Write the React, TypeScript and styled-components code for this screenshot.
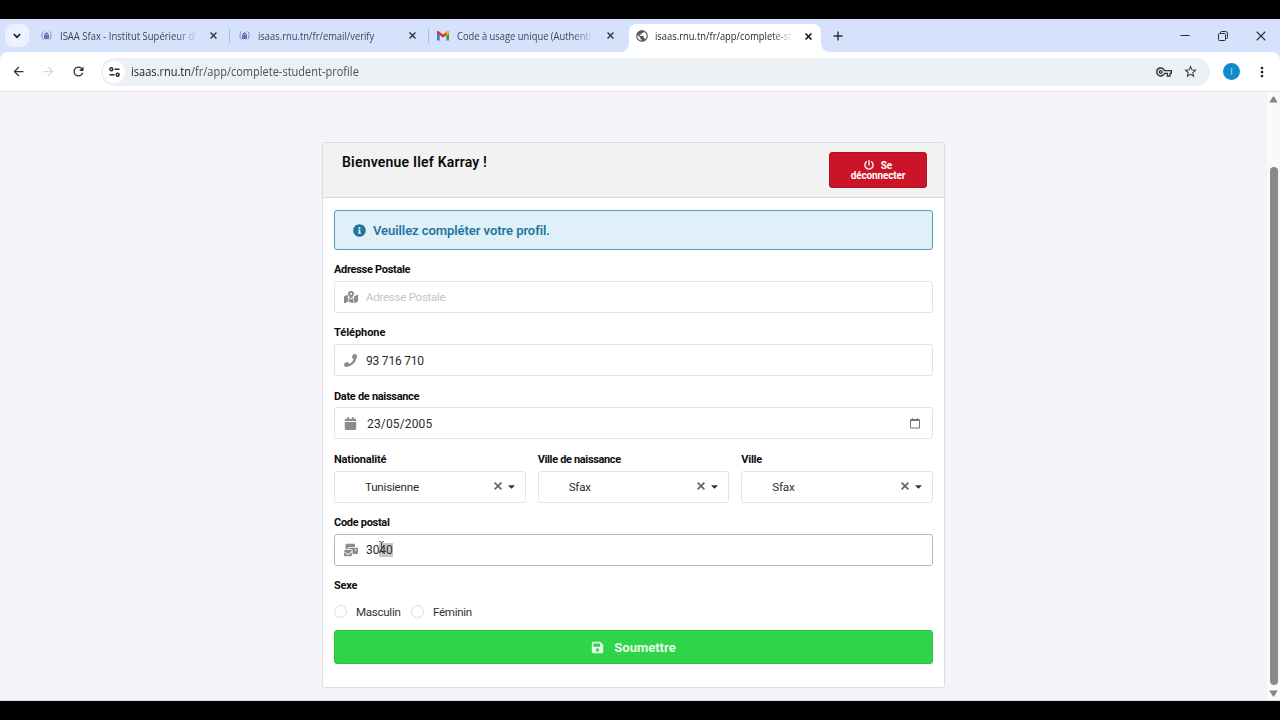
import React from "react";
import styled, { createGlobalStyle } from "styled-components";
import {
  FaInfoCircle,
  FaMapMarkedAlt,
  FaPhone,
  FaCalendar,
  FaMailBulk,
  FaSave,
  FaPowerOff,
  FaCaretDown,
} from "react-icons/fa";
import { MdOutlineVpnKey, MdStarBorder, MdMoreVert, MdArrowBack, MdArrowForward, MdRefresh, MdPublic } from "react-icons/md";

const Global = createGlobalStyle`
  * { box-sizing: border-box; }
  body { margin: 0; background: #000; overflow: hidden; }
  button { font: inherit; color: inherit; }
`;

const Screen = styled.div`
  width: 1280px;
  height: 720px;
  padding: 19px 0;
  display: flex;
  flex-direction: column;
  background: #000;
  font-family: "Open Sans", "Noto Sans", sans-serif;
  color: #1f1f1f;
`;

const TabStrip = styled.div`
  height: 33px;
  flex: none;
  display: flex;
  align-items: center;
  background: #d6e2fb;
`;

const TabSearch = styled.div`
  width: 24px;
  height: 23px;
  margin: 0 10px 0 5px;
  border-radius: 8px;
  background: #ebf2fe;
  display: flex;
  align-items: center;
  justify-content: center;
`;

const Tab = styled.div<{ $w: number; $left?: number; $active?: boolean; $divider?: boolean }>`
  position: relative;
  width: ${(p) => p.$w}px;
  height: ${(p) => (p.$active ? 28 : 14)}px;
  align-self: ${(p) => (p.$active ? "flex-end" : "center")};
  display: flex;
  align-items: center;
  padding: 0 ${(p) => (p.$active ? 9 : p.$divider ? 12 : 15)}px ${(p) => (p.$active ? 4 : 0)}px ${(p) => p.$left ?? 8}px;
  gap: 8px;
  background: ${(p) => (p.$active ? "#fff" : "transparent")};
  border-right: ${(p) => (p.$divider ? "1px solid #a3bfea" : "none")};
  border-radius: ${(p) => (p.$active ? "8px 8px 0 0" : "0")};
  ${(p) =>
    p.$active &&
    `&::before, &::after {
      content: "";
      position: absolute;
      bottom: 0;
      width: 8px;
      height: 8px;
    }
    &::before { left: -8px; background: radial-gradient(circle at 0 0, transparent 7.5px, #fff 8px); }
    &::after { right: -8px; background: radial-gradient(circle at 100% 0, transparent 7.5px, #fff 8px); }`}
`;

const TabTitle = styled.span<{ $fade?: boolean; $dark?: boolean }>`
  flex: 1;
  min-width: 0;
  white-space: nowrap;
  font-size: 10.3px;
  line-height: 14px;
  color: ${(p) => (p.$dark ? "#25282c" : "#3c4656")};
  ${(p) => p.$fade && "mask-image: linear-gradient(90deg, #000 calc(100% - 26px), transparent calc(100% - 4px));"}
`;

/* Narrows a run of text the way the interface font is narrower than the fallback. */
const Narrow = styled.span<{ $x: number }>`
  display: inline-block;
  white-space: nowrap;
  transform: scaleX(${(p) => p.$x});
  transform-origin: left;
`;

const Spacer = styled.div`
  flex: 1;
`;

const WindowButtons = styled.div`
  display: flex;
  align-items: center;
  gap: 28px;
  padding-right: 14px;
`;

const NewTab = styled.div`
  margin-left: 12px;
  display: flex;
`;

const Toolbar = styled.div`
  height: 40px;
  flex: none;
  display: flex;
  align-items: center;
  padding: 0 10px 0 11px;
  background: #fff;
  border-bottom: 1px solid #e0e2e4;
  border-radius: 8px 8px 0 0;
`;

const ToolbarBack = styled.div`
  background: #d6e2fb;
`;

const NavIcons = styled.div`
  display: flex;
  align-items: center;
  gap: 15px;
  width: 90px;
  color: #333;
`;

const Omnibox = styled.div`
  height: 28px;
  width: 1109px;
  border-radius: 14px;
  background: #ecf1f6;
  display: flex;
  align-items: center;
  padding: 0 12px 0 2px;
`;

const SiteInfo = styled.div`
  width: 22px;
  height: 22px;
  border-radius: 11px;
  background: #fff;
  display: flex;
  align-items: center;
  justify-content: center;
`;

const Url = styled.span`
  margin-left: 6px;
  font-size: 12px;
  color: #4b4f54;
  b { color: #1f1f1f; font-weight: 400; }
`;

const OmniActions = styled.div`
  display: flex;
  align-items: center;
  gap: 11px;
  color: #333;
`;

const Avatar = styled.div`
  width: 17px;
  height: 17px;
  margin: 0 14px 0 13px;
  border-radius: 50%;
  background: #0f8bca;
  color: #bfe6fa;
  font: 9px/17px "Open Sans", sans-serif;
  text-align: center;
`;

const Viewport = styled.div`
  flex: 1;
  min-height: 0;
  display: flex;
  background: #f5f3f7;
  border-bottom: 1px solid #d5dcdf;
`;

const Page = styled.main`
  flex: 1;
  padding: 50px 0 0 322px;
`;

const ScrollBar = styled.div`
  width: 13px;
  background: #fafafa;
  display: flex;
  flex-direction: column;
  align-items: center;
  padding: 4px 0 3px;
`;

const Thumb = styled.div`
  width: 8px;
  height: 518px;
  margin-top: 64px;
  border-radius: 4px;
  background: #898989;
`;

const Card = styled.section`
  width: 623px;
  height: 546px;
  border: 1px solid #dcdcde;
  border-radius: 3px;
  background: #fff;
  color: #111;
  font-family: Roboto, "Open Sans", sans-serif;
`;

const CardHeader = styled.header`
  height: 55px;
  display: flex;
  justify-content: space-between;
  padding: 9px 17px 0 19px;
  background: #f2f2f2;
  border-bottom: 1px solid #dadada;
`;

const Title = styled.h1`
  margin: 0;
  font-size: 14px;
  line-height: 20px;
  font-weight: 600;
  letter-spacing: 0.2px;
  color: #0a0a0a;
`;

const LogoutButton = styled.button`
  width: 98px;
  height: 36px;
  padding: 0 15px;
  border: 1px solid #b31226;
  border-radius: 3px;
  background: #cb1428;
  color: #fff;
  font-size: 10px;
  line-height: 10px;
  font-weight: 700;
  letter-spacing: -0.15px;
  svg { margin-right: 7px; vertical-align: -1px; opacity: 0.85; }
`;

const Form = styled.form`
  padding: 12px 11px 0;
`;

const Alert = styled.div`
  height: 40px;
  display: flex;
  align-items: center;
  gap: 7px;
  padding-left: 18px;
  border: 1px solid #5b9bb4;
  border-radius: 3px;
  background: #dff0f9;
  color: #2574a0;
  font-size: 13px;
  font-weight: 600;
  letter-spacing: -0.06px;
`;

const Row = styled.div`
  display: grid;
  grid-auto-flow: column;
  grid-auto-columns: 1fr;
  gap: 12px;
`;

const Field = styled.div<{ $short?: boolean }>`
  height: ${(p) => (p.$short ? 41 : 63.25)}px;
  padding-top: 10px;
`;

const Label = styled.label<{ $track?: number }>`
  display: block;
  height: 20.8px;
  font-size: 11px;
  line-height: 20px;
  font-weight: 700;
  letter-spacing: ${(p) => p.$track ?? -0.3}px;
  color: #0d0d0d;
`;

const Control = styled.div<{ $focus?: boolean; $right?: number }>`
  height: 32px;
  display: flex;
  align-items: center;
  padding: 0 ${(p) => p.$right ?? 12}px 0 9px;
  border: 1px solid ${(p) => (p.$focus ? "#b3b9bb" : "#e3e3e5")};
  border-radius: 3px;
  background: #fff;
  color: #8b8b8b;
`;

const Value = styled.span<{ $track?: number; $muted?: boolean; $indent?: number; $size?: number }>`
  margin-left: ${(p) => p.$indent ?? 8}px;
  padding-top: 1px;
  font-size: ${(p) => p.$size ?? 12}px;
  letter-spacing: ${(p) => p.$track ?? -0.1}px;
  color: ${(p) => (p.$muted ? "#c4c4c4" : "#2b2b2b")};
`;

const Selected = styled.span`
  position: relative;
  background: #c8c8c8;
`;

const Caret = styled.svg`
  position: absolute;
  left: -1px;
  top: -2px;
`;

const ClearAndOpen = styled.div`
  display: flex;
  align-items: center;
  gap: 4px;
  padding-bottom: 1px;
  color: #333;
`;

const Choices = styled.div`
  height: 15px;
  margin-top: -3px;
  display: flex;
  align-items: center;
`;

const Choice = styled.label<{ $w: number }>`
  width: ${(p) => p.$w}px;
  display: flex;
  align-items: center;
  gap: 9px;
  font-size: 11.6px;
  line-height: 16px;
  letter-spacing: -0.3px;
  color: #333;
`;

const Radio = styled.span`
  width: 13px;
  height: 13px;
  border: 1px solid #dadada;
  border-radius: 50%;
`;

const Submit = styled.button`
  width: 100%;
  height: 34px;
  margin-top: 11px;
  display: flex;
  align-items: center;
  justify-content: center;
  gap: 10px;
  border: 1px solid #35bd4c;
  border-radius: 3px;
  background: #2ed548;
  color: #e9fbe9;
  font-size: 13px;
  font-weight: 700;
`;

const Cross = ({ size = 7, color = "#27303b", weight = 1.5 }: { size?: number; color?: string; weight?: number }) => (
  <svg width={size} height={size} viewBox="0 0 8 8" stroke={color} strokeWidth={weight}>
    <path d="M.6.6l6.8 6.8M7.4.6L.6 7.4" />
  </svg>
);

const Crest = () => (
  <svg width="11" height="9" viewBox="0 0 12 10" fill="none" stroke="#7284b5" strokeWidth="1.1">
    <path d="M2.600.500C1 1.500 1.500 3.500.800 5 1.500 6.500 1 8.500 2.600 9.500M9.400.500C11 1.500 10.500 3.500 11.200 5 10.500 6.500 11 8.500 9.400 9.500" />
    <path d="M3.900 4.200L6 1.500l2.100 2.700v4.300H3.900zM3.900 6.200h4.200M6 4.200v4.300" stroke="#51649f" fill="#96a4cd" />
  </svg>
);

const GmailMark = () => (
  <svg width="12" height="10" viewBox="0 0 12 10">
    <path d="M0 1.200V9.500h2.700V3.800z" fill="#4478dd" />
    <path d="M12 1.200V9.500H9.300V3.800z" fill="#2ea650" />
    <path d="M0 2V1.200C0 .2 1.200-.2 2 .4L6 3.500l4-3.100c.8-.6 2-.2 2 .8V2L6 6.800z" fill="#d63a33" />
    <path d="M9.300 1v3.600L12 2.500V1.200C12 .2 10.800-.2 10 .4z" fill="#f2b91b" />
  </svg>
);

const Arrow = ({ down }: { down?: boolean }) => (
  <svg width="9" height="7" viewBox="0 0 9 7" fill="#858585">
    <path d={down ? "M.3.500h8.400L5 6.500H4z" : "M.3 6.500h8.400L5 .500H4z"} />
  </svg>
);

const SelectField = ({ label, value, track }: { label: string; value: string; track: number }) => (
  <Field>
    <Label $track={track}>{label}</Label>
    <Control $right={8}>
      <Value $indent={21} $size={11.6} $track={-0.2}>{value}</Value>
      <Spacer />
      <ClearAndOpen>
        <Cross size={8} color="#666" weight={1.7} />
        <FaCaretDown size={11} />
      </ClearAndOpen>
    </Control>
  </Field>
);

export default function App() {
  return (
    <>
      <Global />
      <Screen>
        <TabStrip>
          <TabSearch>
            <svg width="8" height="6" viewBox="0 0 8 6" fill="none" stroke="#1c1f24" strokeWidth="1.7">
              <path d="M.8 1l3.200 3.200L7.200 1" />
            </svg>
          </TabSearch>
          <Tab $w={191} $divider $left={2}>
            <Crest />
            <TabTitle $fade><Narrow $x={0.92}>ISAA Sfax - Institut Supérieur d’</Narrow></TabTitle>
            <Cross />
          </Tab>
          <Tab $w={199} $divider $left={9}>
            <Crest />
            <TabTitle><Narrow $x={0.91}>isaas.rnu.tn/fr/email/verify</Narrow></TabTitle>
            <Cross />
          </Tab>
          <Tab $w={200}>
            <GmailMark />
            <TabTitle $fade><Narrow $x={0.91}>Code à usage unique (Authenti</Narrow></TabTitle>
            <Cross />
          </Tab>
          <Tab $w={192} $active $left={6}>
            <MdPublic size={14} color="#55595f" style={{ marginRight: -2 }} />
            <TabTitle $fade $dark><Narrow $x={0.91}>isaas.rnu.tn/fr/app/complete-st</Narrow></TabTitle>
            <Cross color="#111" weight={1.8} />
          </Tab>
          <NewTab>
            <svg width="10" height="10" viewBox="0 0 10 10" stroke="#25303e" strokeWidth="1.400">
              <path d="M5 .5v9M.5 5h9" />
            </svg>
          </NewTab>
          <Spacer />
          <WindowButtons>
            <svg width="10" height="10" viewBox="0 0 10 10" stroke="#262d38"><path d="M.5 4.500h9" /></svg>
            <svg width="10" height="10" viewBox="0 0 10 10" fill="none" stroke="#262d38">
              <rect x=".5" y="2.500" width="7" height="7" rx="1" />
              <path d="M2.500 2.200V1.500q0-1 1-1h4q2 0 2 2v4q0 1-1 1H8" />
            </svg>
            <Cross size={10} weight={0.9} />
          </WindowButtons>
        </TabStrip>
        <ToolbarBack>
          <Toolbar>
            <NavIcons>
              <MdArrowBack size={15} />
              <MdArrowForward size={15} color="#dbd8d8" />
              <MdRefresh size={15} />
            </NavIcons>
            <Omnibox>
              <SiteInfo>
                <svg width="11" height="10" viewBox="0 0 11 10" fill="none" stroke="#25282c" strokeWidth="1.400">
                  <circle cx="2.300" cy="2.300" r="1.500" />
                  <path d="M5.500 2.300H10.500M.5 7.700h5" />
                  <circle cx="8.700" cy="7.700" r="1.500" />
                </svg>
              </SiteInfo>
              <Url><Narrow $x={0.918}><b>isaas.rnu.tn</b>/fr/app/complete-student-profile</Narrow></Url>
              <Spacer />
              <OmniActions>
                <MdOutlineVpnKey size={16} />
                <MdStarBorder size={15} />
              </OmniActions>
            </Omnibox>
            <Avatar>I</Avatar>
            <MdMoreVert size={16} />
          </Toolbar>
        </ToolbarBack>
        <Viewport>
          <Page>
            <Card>
              <CardHeader>
                <Title>Bienvenue Ilef Karray !</Title>
                <LogoutButton><FaPowerOff size={10} />Se déconnecter</LogoutButton>
              </CardHeader>
              <Form>
                <Alert><FaInfoCircle size={13} />Veuillez compléter votre profil.</Alert>
                <Field>
                  <Label>Adresse Postale</Label>
                  <Control><FaMapMarkedAlt size={14} /><Value $muted $size={11.6} $track={-0.3}>Adresse Postale</Value></Control>
                </Field>
                <Field>
                  <Label $track={-0.05}>Téléphone</Label>
                  <Control><FaPhone size={13} /><Value $indent={9} $track={-0.2}>93 716 710</Value></Control>
                </Field>
                <Field>
                  <Label>Date de naissance</Label>
                  <Control>
                    <FaCalendar size={13} /><Value $indent={10} $track={0.15}>23/05/2005</Value>
                    <Spacer />
                    <svg width="10" height="11" viewBox="0 0 10 11" fill="none" stroke="#777">
                      <path d="M.5 1.500h9v8.500h-9zM.5 2.500h9M2.500 0v2M7.500 0v2" />
                    </svg>
                  </Control>
                </Field>
                <Row>
                  <SelectField label="Nationalité" value="Tunisienne" track={-0.15} />
                  <SelectField label="Ville de naissance" value="Sfax" track={-0.35} />
                  <SelectField label="Ville" value="Sfax" track={-0.25} />
                </Row>
                <Field>
                  <Label>Code postal</Label>
                  <Control $focus>
                    <FaMailBulk size={14} />
                    <Value>
                      30
                      <Selected>
                        40
                        <Caret width="7" height="12" viewBox="0 0 7 12" fill="none" stroke="#444" strokeWidth=".9">
                          <path d="M1 .5q2.500 0 2.500 1.500Q3.500.500 6 .500M3.500 2v8M1 11.500q2.500 0 2.500-1.500 0 1.500 2.500 1.500" />
                        </Caret>
                      </Selected>
                    </Value>
                  </Control>
                </Field>
                <Field $short>
                  <Label $track={-0.2}>Sexe</Label>
                </Field>
                <Choices>
                  <Choice $w={77}><Radio />Masculin</Choice>
                  <Choice $w={80}><Radio />Féminin</Choice>
                </Choices>
                <Submit type="button"><FaSave size={13} />Soumettre</Submit>
              </Form>
            </Card>
          </Page>
          <ScrollBar>
            <Arrow />
            <Thumb />
            <Spacer />
            <Arrow down />
          </ScrollBar>
        </Viewport>
      </Screen>
    </>
  );
}
